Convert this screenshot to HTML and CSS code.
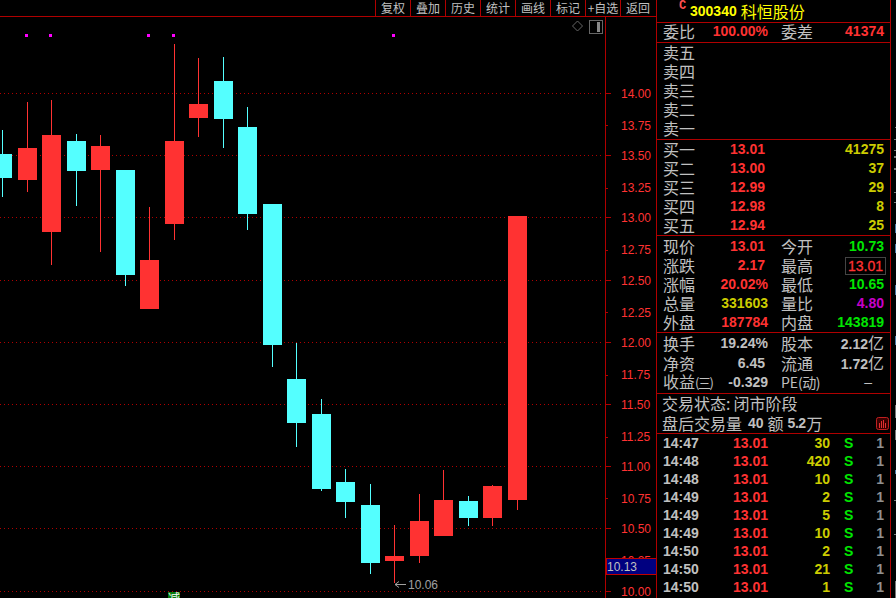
FILE: index.html
```html
<!DOCTYPE html>
<html lang="zh-CN">
<head>
<meta charset="utf-8">
<title>300340 科恒股份</title>
<link rel="stylesheet" href="styles.css">
</head>
<body>
<div class="screen">
  <main class="chart-col">
    <nav class="toolbar">
      <span class="tool">复权</span><span class="tool">叠加</span><span class="tool">历史</span><span class="tool">统计</span><span class="tool">画线</span><span class="tool">标记</span><span class="tool">+自选</span><span class="tool">返回</span>
    </nav>
    <svg class="chart" viewBox="0 17 656 581" width="656" height="581" aria-label="K线图">
      <g class="grid">
        <path d="M0 93.5H604M0 155.5H604M0 217.5H604M0 280.5H604M0 342.5H604M0 404.5H604M0 466.5H604M0 528.5H604M0 591.5H604"/>
      </g>
      <path class="up" d="M18 148h19v32H18z M27 102h1v90h-1z M42 135h19v97H42z M51 100h1v165h-1z M91 146h19v24H91z M100 135h1v117h-1z M140 260h19v49h-19z M149 207h1v102h-1z M165 141h19v83h-19z M174 44h1v196h-1z M189 104h19v14h-19z M198 58h1v79h-1z M385 556h19v5h-19z M394 525h1v58h-1z M410 521h19v35h-19z M419 494h1v69h-1z M434 500h19v36h-19z M443 470h1v66h-1z M483 486h19v32h-19z M492 485h1v41h-1z M508 216h19v284h-19z M517 216h1v294h-1z"/>
      <path class="down" d="M0 154h12v24H0z M2 130h1v67H2z M67 141h19v30H67z M76 134h1v72h-1z M116 170h19v105h-19z M125 170h1v116h-1z M214 81h19v38h-19z M223 57h1v91h-1z M238 127h19v87h-19z M247 107h1v123h-1z M263 204h19v141h-19z M272 204h1v163h-1z M287 379h19v44h-19z M296 343h1v104h-1z M312 414h19v75h-19z M321 399h1v92h-1z M336 482h19v20h-19z M345 469h1v49h-1z M361 505h19v58h-19z M370 484h1v90h-1z M459 501h19v17h-19z M468 496h1v30h-1z"/>
      <path class="mark" d="M25 34h3v3h-3z M49 34h3v3h-3z M147 34h3v3h-3z M172 34h3v3h-3z M392 34h3v3h-3z"/>
      <path class="axis" d="M605.5 17V598 M605 93.5h6M605 155.5h6M605 217.5h6M605 280.5h6M605 342.5h6M605 404.5h6M605 466.5h6M605 528.5h6M605 591.5h6M605 125.5h3M605 188.5h3M605 250.5h3M605 312.5h3M605 375.5h3M605 437.5h3M605 498.5h3M605 560.5h3"/>
      <g class="scale">
        <text x="621" y="98">14.00</text><text x="621" y="130">13.75</text><text x="621" y="160">13.50</text><text x="621" y="192">13.25</text><text x="621" y="222">13.00</text><text x="621" y="254">12.75</text><text x="621" y="285">12.50</text><text x="621" y="317">12.25</text><text x="621" y="347">12.00</text><text x="621" y="379">11.75</text><text x="621" y="409">11.50</text><text x="621" y="441">11.25</text><text x="621" y="471">11.00</text><text x="621" y="503">10.75</text><text x="621" y="533">10.50</text><text x="621" y="565">10.25</text><text x="621" y="596">10.00</text>
      </g>
      <rect class="last-box" x="606" y="558.5" width="50" height="16"/>
      <text class="last-text" x="607" y="571">10.13</text>
      <path class="low-arrow" d="M406 584.5H395M395 584.5l4-3M395 584.5l4 3"/>
      <text class="low-text" x="408" y="589">10.06</text>
      <path class="tool-icon" d="M577.5 21l5 5-5 5-5-5z"/>
      <rect class="tool-icon" x="589.5" y="20.5" width="13" height="13"/>
      <rect class="tool-fill" x="597" y="22" width="3" height="10"/>
      <rect class="tag" x="168" y="592" width="12" height="6"/>
      <text class="tag-text" x="168" y="603">减</text>
    </svg>
  </main>

  <aside class="panel">
    <header class="sec head">
      <span class="badge">C</span>
      <span class="code">300340</span>
      <span class="name">科恒股份</span>
    </header>

    <section class="sec rows ratio">
      <div class="row"><span class="lb">委比</span><span class="num red">100.00%</span><span class="lb lb2">委差</span><span class="num red">41374</span></div>
    </section>

    <section class="sec rows sell">
      <div class="row"><span class="lb">卖五</span></div>
      <div class="row"><span class="lb">卖四</span></div>
      <div class="row"><span class="lb">卖三</span></div>
      <div class="row"><span class="lb">卖二</span></div>
      <div class="row"><span class="lb">卖一</span></div>
    </section>

    <section class="sec rows">
      <div class="row"><span class="lb">买一</span><span class="num red inset">13.01</span><span class="lb lb2"></span><span class="num olive">41275</span></div>
      <div class="row"><span class="lb">买二</span><span class="num red inset">13.00</span><span class="lb lb2"></span><span class="num olive">37</span></div>
      <div class="row"><span class="lb">买三</span><span class="num red inset">12.99</span><span class="lb lb2"></span><span class="num olive">29</span></div>
      <div class="row"><span class="lb">买四</span><span class="num red inset">12.98</span><span class="lb lb2"></span><span class="num olive">8</span></div>
      <div class="row"><span class="lb">买五</span><span class="num red inset">12.94</span><span class="lb lb2"></span><span class="num olive">25</span></div>
    </section>

    <section class="sec rows quote">
      <div class="row"><span class="lb">现价</span><span class="num red inset">13.01</span><span class="lb lb2">今开</span><span class="num green">10.73</span></div>
      <div class="row"><span class="lb">涨跌</span><span class="num red inset">2.17</span><span class="lb lb2">最高</span><span class="num red boxed">13.01</span></div>
      <div class="row"><span class="lb">涨幅</span><span class="num red">20.02%</span><span class="lb lb2">最低</span><span class="num green">10.65</span></div>
      <div class="row"><span class="lb">总量</span><span class="num olive">331603</span><span class="lb lb2">量比</span><span class="num purple">4.80</span></div>
      <div class="row"><span class="lb">外盘</span><span class="num red">187784</span><span class="lb lb2">内盘</span><span class="num green">143819</span></div>
    </section>

    <section class="sec rows stats">
      <div class="row"><span class="lb">换手</span><span class="num grey">19.24%</span><span class="lb lb2">股本</span><span class="num grey">2.12<span class="unit">亿</span></span></div>
      <div class="row"><span class="lb">净资</span><span class="num grey inset">6.45</span><span class="lb lb2">流通</span><span class="num grey">1.72<span class="unit">亿</span></span></div>
      <div class="row"><span class="lb">收益<span class="small">(三)</span></span><span class="num grey">-0.329</span><span class="lb lb2 pe">PE<span class="small-pe">(动)</span></span><span class="num grey dash">–</span></div>
    </section>

    <section class="sec status">
      <div class="line">交易状态:<span class="gap">闭市阶段</span></div>
      <div class="line">盘后交易量<b class="val">40</b><span class="word">额</span><b class="val val-amt">5.2</b><span>万</span>
        <svg class="bars" viewBox="0 0 13 13" width="13" height="13"><rect x="0.5" y="0.5" width="12" height="12" rx="2"/><path d="M3.5 6v5M5.5 4v7M7.5 3v8M9.5 6v5"/></svg>
      </div>
    </section>

    <section class="trades">
      <div class="trade"><span class="time">14:47</span><span class="price">13.01</span><span class="qty">30</span><span class="side">S</span><span class="cnt">1</span></div>
      <div class="trade"><span class="time">14:48</span><span class="price">13.01</span><span class="qty">420</span><span class="side">S</span><span class="cnt">1</span></div>
      <div class="trade"><span class="time">14:48</span><span class="price">13.01</span><span class="qty">10</span><span class="side">S</span><span class="cnt">1</span></div>
      <div class="trade"><span class="time">14:49</span><span class="price">13.01</span><span class="qty">2</span><span class="side">S</span><span class="cnt">1</span></div>
      <div class="trade"><span class="time">14:49</span><span class="price">13.01</span><span class="qty">5</span><span class="side">S</span><span class="cnt">1</span></div>
      <div class="trade"><span class="time">14:49</span><span class="price">13.01</span><span class="qty">10</span><span class="side">S</span><span class="cnt">1</span></div>
      <div class="trade"><span class="time">14:50</span><span class="price">13.01</span><span class="qty">2</span><span class="side">S</span><span class="cnt">1</span></div>
      <div class="trade"><span class="time">14:50</span><span class="price">13.01</span><span class="qty">21</span><span class="side">S</span><span class="cnt">1</span></div>
      <div class="trade"><span class="time">14:50</span><span class="price">13.01</span><span class="qty">1</span><span class="side">S</span><span class="cnt">1</span></div>
    </section>
  </aside>

  <svg class="strip" viewBox="0 0 5 598" width="5" height="598" aria-hidden="true">
    <path class="strip-grey" d="M4 127h1v1H4z M3 139h2v1H3z M3 150h2v1H3z M3 156h2v2H3z M3 168h2v2H3z M3 192h2v1H3z M3 202h2v1H3z M4 430h1v10H4z M3 500h2v1H3z M3 534h2v1H3z M4 581h1v17H4z M4 405h1v13H4z"/>
    <path class="strip-blue" d="M4 224h1v9H4z M4 244h1v9H4z M4 285h1v10H4z M4 336h1v9H4z M4 470h1v4H4z"/>
  </svg>
</div>
</body>
</html>
```

FILE: styles.css
```css
html, body {
  margin: 0;
  padding: 0;
  background: #000;
  overflow: hidden;
}

.screen {
  display: flex;
  width: 896px;
  height: 598px;
  background: #000;
  color: #c0c0c0;
  font-family: "Liberation Sans", Arial, "Noto Sans CJK SC", sans-serif;
  overflow: hidden;
}

/* Left: chart column */
.chart-col {
  width: 656px;
  flex: none;
  display: flex;
  flex-direction: column;
}

.toolbar {
  display: flex;
  justify-content: flex-end;
  height: 16px;
  padding-right: 1px;
  border-bottom: 1px solid #b00000;
}

.tool {
  width: 34px;
  border-left: 1px solid #b00000;
  text-align: center;
  font: 12px/15px "Noto Sans CJK SC", sans-serif;
  color: #c0c0c0;
  overflow: hidden;
  white-space: nowrap;
}

.chart {
  display: block;
  shape-rendering: crispEdges;
}

.grid path {
  stroke: #b00000;
  stroke-width: 1;
  stroke-dasharray: 1 3;
  fill: none;
}

.up { fill: #ff3232; }
.down { fill: #54ffff; }
.mark { fill: #ff00ff; }

.axis {
  stroke: #b00000;
  fill: none;
}

.scale text {
  font: 12px "Liberation Sans", sans-serif;
  fill: #ff3232;
}

.last-box {
  fill: #000080;
  stroke: #c00000;
}

.last-text {
  font: 12px "Liberation Sans", sans-serif;
  fill: #c0c0c0;
}

.low-arrow {
  stroke: #a0a0a0;
  fill: none;
  shape-rendering: auto;
}

.low-text {
  font: 12px "Liberation Sans", sans-serif;
  fill: #a0a0a0;
}

.tool-icon {
  stroke: #666;
  fill: none;
  shape-rendering: auto;
}

.tool-fill { fill: #888; }
.tag { fill: #0a7a0a; }

.tag-text {
  font: 12px "Noto Sans CJK SC", sans-serif;
  fill: #fff;
}

/* Right: quote panel */
.panel {
  width: 233px;
  flex: none;
  display: flex;
  flex-direction: column;
  border-left: 1px solid #b00000;
  border-right: 1px solid #b00000;
}

.sec { border-bottom: 1px solid #b00000; }

.head {
  height: 22px;
  display: flex;
  align-items: center;
  padding-left: 22px;
  color: #ffff00;
}

.badge {
  align-self: flex-start;
  width: 11px;
  font: bold 12px/12px "Liberation Mono", monospace;
  color: #ff5050;
}

.code {
  font: bold 14px/22px "Liberation Sans", sans-serif;
}

.name {
  margin-left: 4px;
  font: 16px/22px "Noto Sans CJK SC", sans-serif;
}

.row {
  display: grid;
  grid-template-columns: 32px 73px 45px 1fr;
  height: 19px;
  line-height: 19px;
  padding: 0 6px;
  white-space: nowrap;
  align-items: center;
}

.ratio .row { position: relative; top: -1px; }
.sell { padding-bottom: 1px; }
.quote { padding-top: 1px; }
.stats { padding-bottom: 2px; }
.stats .row:first-child { height: 20px; line-height: 20px; }

.lb {
  font: 16px/19px "Noto Sans CJK SC", sans-serif;
  color: #c0c0c0;
}

.lb2 { padding-left: 13px; }

.small {
  font-size: 13px;
  letter-spacing: -1.5px;
}

.pe { font-size: 14px; }
.small-pe { font-size: 14px; letter-spacing: -0.5px; }

.num {
  font: bold 14px/19px "Liberation Sans", sans-serif;
  text-align: right;
}

.inset { padding-right: 3px; }
.red { color: #ff3232; }
.olive { color: #cccc00; }
.green { color: #00e600; }
.purple { color: #c800c8; }
.grey { color: #c0c0c0; }

.boxed {
  justify-self: end;
  margin-right: -2px;
  padding: 0 2px;
  border: 1px solid #444;
  line-height: 16px;
  font-weight: normal;
  -webkit-text-stroke: 0.3px #ff3232;
}

.unit {
  font: 16px/19px "Noto Sans CJK SC", sans-serif;
}

.dash {
  padding-right: 12px;
  font-weight: normal;
}

.status {
  padding: 0 0 0 5px;
  height: 39px;
}

.line {
  display: flex;
  align-items: center;
  height: 19px;
  font: 16px/19px "Noto Sans CJK SC", sans-serif;
  color: #c0c0c0;
  white-space: nowrap;
}

.line + .line { height: 20px; }

.gap { margin-left: 3px; }

.val {
  font: bold 14px/20px "Liberation Sans", sans-serif;
  margin: 0 1px 0 6px;
}

.val-amt {
  margin: 0 1px 0 4px;
  letter-spacing: -0.5px;
}

.word { margin-left: 3px; }

.bars {
  margin-left: auto;
  margin-right: 1px;
  display: block;
  shape-rendering: crispEdges;
}

.bars rect {
  fill: #3a0000;
  stroke: #c02020;
  shape-rendering: auto;
}

.bars path {
  stroke: #e03030;
  fill: none;
}

.trades {
  flex: 1;
  padding: 0 6px;
}

.trade {
  display: grid;
  grid-template-columns: 50px 55px 62px 1fr 30px;
  height: 18px;
  font: bold 14px/18px "Liberation Sans", sans-serif;
}

.time { color: #c0c0c0; }
.price { color: #ff3232; text-align: right; }
.qty { color: #cccc00; text-align: right; }
.side { color: #00e600; padding-left: 14px; }
.cnt { color: #909090; text-align: right; }

/* Clipped sliver of the neighbouring window */
.strip {
  width: 5px;
  flex: none;
  shape-rendering: crispEdges;
}

.strip-grey { fill: #777; }
.strip-blue { fill: #4a78a0; }
```
